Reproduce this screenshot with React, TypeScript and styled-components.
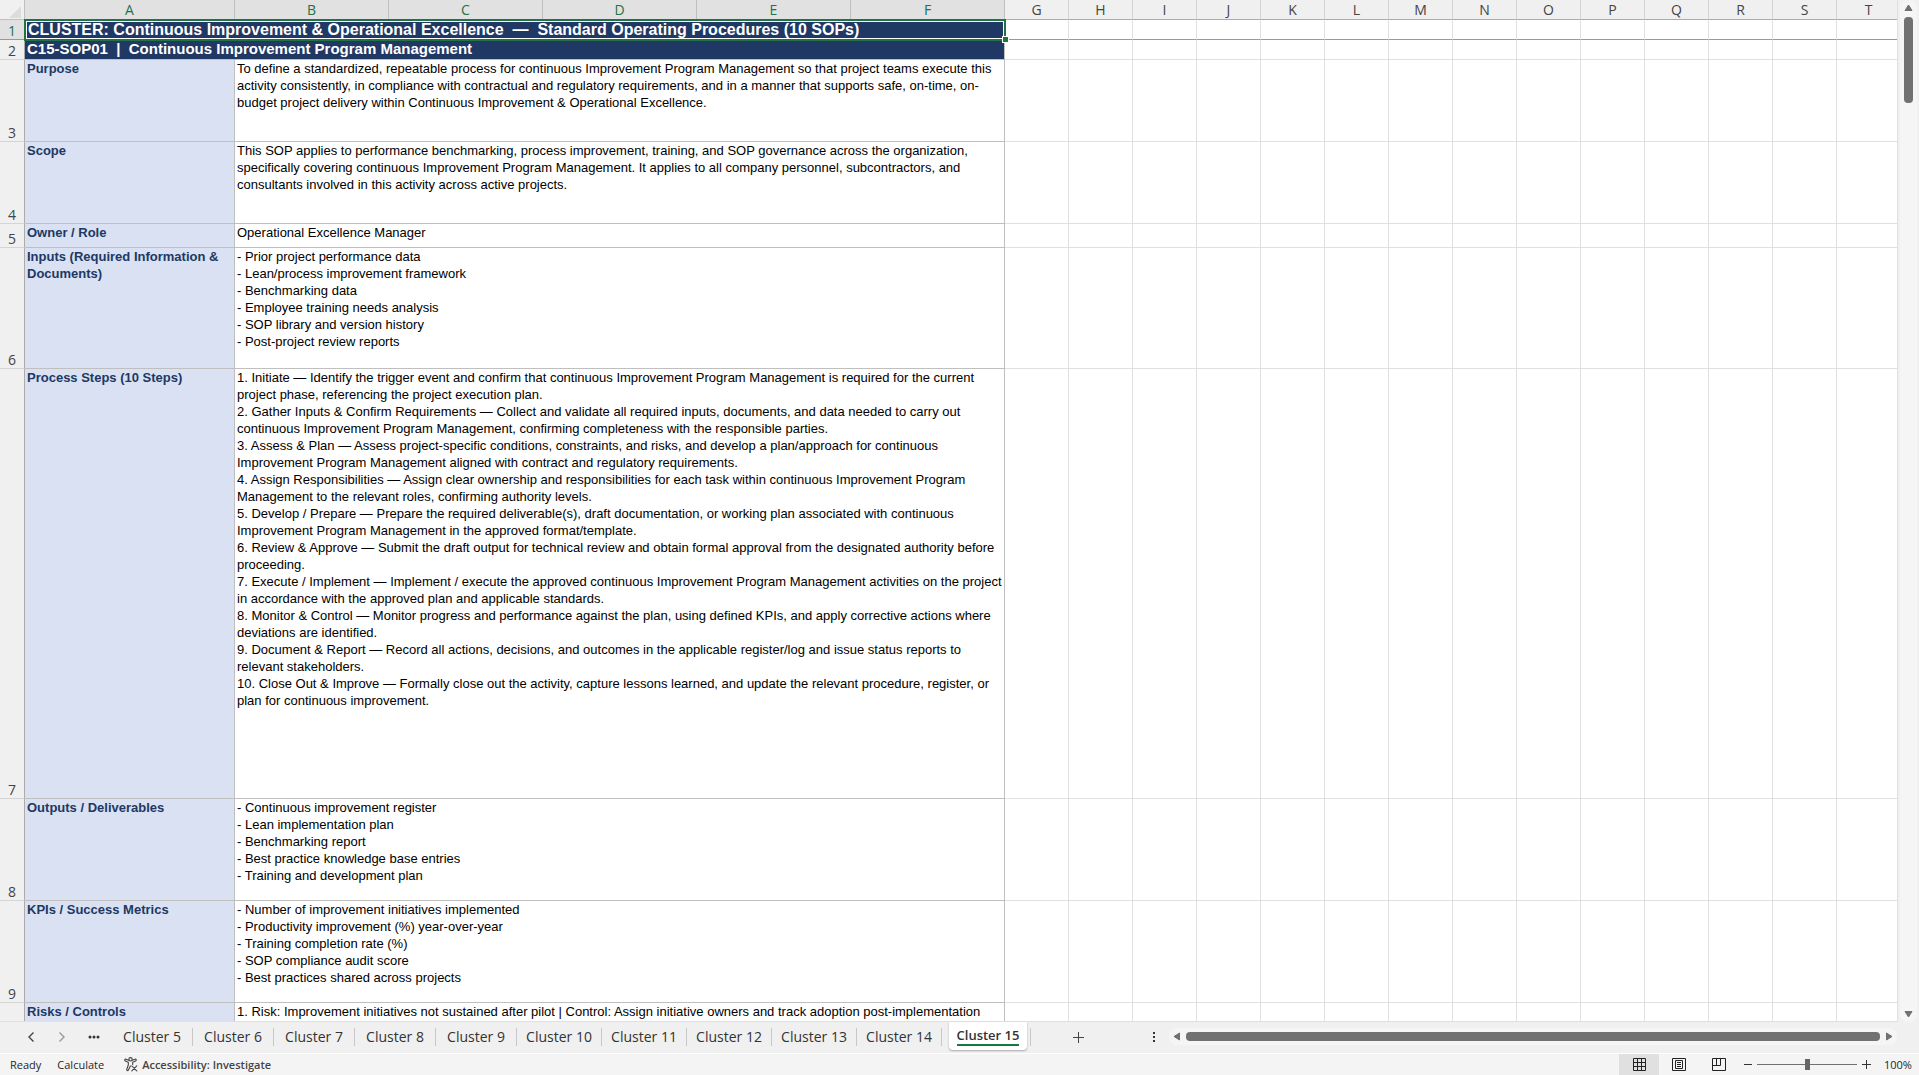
import React from 'react';
import styled, { createGlobalStyle, css } from 'styled-components';

const GlobalStyle = createGlobalStyle`
  *, *::before, *::after { box-sizing: border-box; }
  html, body { margin: 0; padding: 0; }
  body { background: #f0f0f0; overflow: hidden; }
  button { font: inherit; color: inherit; background: none; border: 0; margin: 0; padding: 0; }
`;

const uiFont = '"Open Sans", "Noto Sans", sans-serif';
const cellFont = '"Liberation Sans", Arial, sans-serif';
const gridLine = '#e0e0e0';
const cellLine = '#bfbfbf';
const navy = '#203864';
const green = '#217346';

const Workbook = styled.div`
  display: flex;
  flex-direction: column;
  height: 100vh;
  font-family: ${uiFont};
  color: #333;
`;

const SheetArea = styled.main`
  display: flex;
  flex: 1;
  min-height: 0;
`;

const GridPane = styled.div`
  flex: 1;
  min-width: 0;
  overflow: hidden;
  background: #fff;
  border-right: 1px solid ${gridLine};
  border-bottom: 1px solid ${gridLine};
`;

const Grid = styled.table`
  width: 0;
  table-layout: fixed;
  border-collapse: separate;
  border-spacing: 0;
`;

const Col = styled.col<{ $width: number }>`
  width: ${(p) => p.$width}px;
`;

const HeadRow = styled.tr`
  height: 20px;
`;

const Corner = styled.td`
  padding: 0;
  background: #f0f0f0;
  border-right: 1px solid #bfbfbf;
  border-bottom: 1px solid #bfbfbf;

  svg { display: block; margin: 4px 0 0 9px; }
`;

const ColumnHead = styled.th<{ $selected: boolean }>`
  padding: 1px 0;
  font: 400 14px/17px ${uiFont};
  color: ${(p) => (p.$selected ? green : '#444')};
  background: ${(p) => (p.$selected ? '#e1e1e1' : '#f0f0f0')};
  border-right: 1px solid ${(p) => (p.$selected ? '#bfbfbf' : '#d4d4d4')};
  border-bottom: 1px solid ${(p) => (p.$selected ? green : '#ababab')};
`;

const Row = styled.tr<{ $height: number }>`
  height: ${(p) => p.$height}px;
`;

const RowHead = styled.th<{ $selected: boolean; $frozen: boolean }>`
  padding: 0;
  vertical-align: bottom;
  font: 400 14px/17px ${uiFont};
  color: ${(p) => (p.$selected ? green : '#444')};
  background: ${(p) => (p.$selected ? '#e1e1e1' : '#f0f0f0')};
  border-right: 1px solid #ababab;
  border-bottom: 1px solid ${(p) => (p.$frozen ? '#999' : '#d4d4d4')};
`;

const Cell = styled.td<{ $frozen: boolean }>`
  padding: 0;
  border-right: 1px solid ${gridLine};
  border-bottom: 1px solid ${(p) => (p.$frozen ? '#999' : gridLine)};
`;

const banner = css`
  padding: 0 2px;
  font-family: ${cellFont};
  font-weight: 700;
  color: #fff;
  text-align: left;
  white-space: pre;
  background: ${navy};
`;

const TitleCell = styled.td`
  ${banner}
  position: relative;
  font-size: 16px;
  line-height: 18px;
  padding-left: 3px;
  border-bottom: 1px solid #999;
`;

const Selection = styled.span`
  position: absolute;
  inset: -1px -1px -2px -1px;
  border: 2px solid ${green};
  box-shadow: inset 0 0 0 1px #fff;
  pointer-events: none;
`;

const FillHandle = styled.span`
  position: absolute;
  right: -3px;
  bottom: -3px;
  width: 5px;
  height: 5px;
  background: ${green};
  outline: 1px solid #fff;
`;

const SubtitleCell = styled.td`
  ${banner}
  font-size: 15px;
  line-height: 17px;
  vertical-align: top;
  border-right: 1px solid ${cellLine};
  border-bottom: 1px solid ${cellLine};
`;

const LabelCell = styled.td`
  padding: 0 2px;
  vertical-align: top;
  font: 700 13px/17px ${cellFont};
  color: ${navy};
  white-space: pre;
  background: #d9e1f2;
  border-right: 1px solid ${cellLine};
  border-bottom: 1px solid ${cellLine};
`;

const TextCell = styled.td`
  padding: 0 2px;
  vertical-align: top;
  font: 400 13px/17px ${cellFont};
  color: #000;
  white-space: pre;
  border-right: 1px solid ${cellLine};
  border-bottom: 1px solid ${cellLine};
`;

const VerticalScroll = styled.div`
  display: flex;
  flex-direction: column;
  align-items: center;
  gap: 5px;
  width: 17px;
  margin: 0 2px;
  padding: 4px 0;
  border-radius: 8px;
  background: #f5f5f5;
`;

const VerticalThumb = styled.div`
  width: 9px;
  height: 86px;
  margin-bottom: auto;
  border-radius: 4px;
  background: #717171;
`;

const ArrowButton = styled.button`
  display: flex;
  flex: none;
`;

const TabStrip = styled.nav`
  display: flex;
  align-items: flex-start;
  flex: none;
  height: 31px;
  background: #f0f0f0;
`;

const TabNav = styled.div`
  display: flex;
  align-items: center;
  justify-content: space-between;
  width: 112px;
  height: 29px;
  padding: 0 12px 0 27px;
`;

const IconButton = styled.button`
  display: flex;
  align-items: center;
  justify-content: center;
`;

const SheetTab = styled.button<{ $wide: boolean }>`
  width: ${(p) => (p.$wide ? 85 : 81)}px;
  height: 18px;
  margin-top: 6px;
  font-size: 14px;
  line-height: 18px;
  white-space: nowrap;
  border-right: 1px solid #c8c8c8;
`;

const ActiveTabSlot = styled.div`
  display: flex;
  height: 24px;
  padding: 0 3px 0 7px;
`;

const ActiveTab = styled.button`
  width: 78px;
  height: 28px;
  padding: 4px 0 0;
  display: flex;
  flex-direction: column;
  align-items: center;
  font-size: 13px;
  font-weight: 600;
  line-height: 18px;
  white-space: nowrap;
  background: #fff;
  border-radius: 0 0 4px 4px;
  box-shadow: 0 1px 2px rgba(0, 0, 0, 0.3);

  span { border-bottom: 2px solid #107c41; }
`;

const TabDivider = styled.div`
  width: 1px;
  height: 18px;
  margin-top: 6px;
  background: #c8c8c8;
`;

const AddSlot = styled.div`
  display: flex;
  flex: none;
  align-items: center;
  justify-content: space-between;
  width: 133px;
  height: 29px;
  padding: 0 9px 0 41px;
`;

const HorizontalScroll = styled.div`
  display: flex;
  flex: 1;
  align-items: center;
  gap: 5px;
  height: 17px;
  margin: 6px 22px 0 5px;
  padding: 0 4px;
  border-radius: 8px;
  background: #f5f5f5;
`;

const HorizontalThumb = styled.div`
  flex: 1;
  height: 9px;
  border-radius: 4px;
  background: #717171;
`;

const StatusBar = styled.footer`
  display: flex;
  align-items: center;
  flex: none;
  height: 22px;
  padding: 0 7px 0 10px;
  font-size: 11px;
  line-height: 16px;
  color: #262626;
  background: #f4f4f4;
  border-top: 1px solid #fff;
`;

const StatusText = styled.span`
  margin-right: 16px;
`;

const AccessButton = styled.button`
  display: flex;
  align-items: center;
  gap: 4px;
  margin-left: 4px;
  font-weight: 600;
  color: #444;
`;

const ViewButtons = styled.div`
  display: flex;
  margin-left: auto;
  height: 21px;
`;

const ViewButton = styled(IconButton)<{ $active?: boolean }>`
  width: 40px;
  background: ${(p) => (p.$active ? '#e0e0e0' : 'transparent')};
`;

const ZoomControl = styled.div`
  display: flex;
  align-items: center;
  gap: 5px;
  margin: 0 13px 0 5px;
`;

const ZoomSlider = styled.input`
  appearance: none;
  width: 100px;
  height: 12px;
  margin: 0;
  background: linear-gradient(#717171, #717171) center / 100% 1px no-repeat;

  &::-webkit-slider-thumb {
    appearance: none;
    width: 5px;
    height: 11px;
    background: #666;
  }
`;

const ZoomLevel = styled.span`
  width: 28px;
  white-space: nowrap;
`;

type SheetRecord = { row: number; height: number; label: string; text: string };

const records: SheetRecord[] = [
  {
    row: 3,
    height: 82,
    label: 'Purpose',
    text: `To define a standardized, repeatable process for continuous Improvement Program Management so that project teams execute this
activity consistently, in compliance with contractual and regulatory requirements, and in a manner that supports safe, on-time, on-
budget project delivery within Continuous Improvement & Operational Excellence.`,
  },
  {
    row: 4,
    height: 82,
    label: 'Scope',
    text: `This SOP applies to performance benchmarking, process improvement, training, and SOP governance across the organization,
specifically covering continuous Improvement Program Management. It applies to all company personnel, subcontractors, and
consultants involved in this activity across active projects.`,
  },
  { row: 5, height: 24, label: 'Owner / Role', text: 'Operational Excellence Manager' },
  {
    row: 6,
    height: 121,
    label: 'Inputs (Required Information &\nDocuments)',
    text: `- Prior project performance data
- Lean/process improvement framework
- Benchmarking data
- Employee training needs analysis
- SOP library and version history
- Post-project review reports`,
  },
  {
    row: 7,
    height: 430,
    label: 'Process Steps (10 Steps)',
    text: `1. Initiate — Identify the trigger event and confirm that continuous Improvement Program Management is required for the current
project phase, referencing the project execution plan.
2. Gather Inputs & Confirm Requirements — Collect and validate all required inputs, documents, and data needed to carry out
continuous Improvement Program Management, confirming completeness with the responsible parties.
3. Assess & Plan — Assess project-specific conditions, constraints, and risks, and develop a plan/approach for continuous
Improvement Program Management aligned with contract and regulatory requirements.
4. Assign Responsibilities — Assign clear ownership and responsibilities for each task within continuous Improvement Program
Management to the relevant roles, confirming authority levels.
5. Develop / Prepare — Prepare the required deliverable(s), draft documentation, or working plan associated with continuous
Improvement Program Management in the approved format/template.
6. Review & Approve — Submit the draft output for technical review and obtain formal approval from the designated authority before
proceeding.
7. Execute / Implement — Implement / execute the approved continuous Improvement Program Management activities on the project
in accordance with the approved plan and applicable standards.
8. Monitor & Control — Monitor progress and performance against the plan, using defined KPIs, and apply corrective actions where
deviations are identified.
9. Document & Report — Record all actions, decisions, and outcomes in the applicable register/log and issue status reports to
relevant stakeholders.
10. Close Out & Improve — Formally close out the activity, capture lessons learned, and update the relevant procedure, register, or
plan for continuous improvement.`,
  },
  {
    row: 8,
    height: 102,
    label: 'Outputs / Deliverables',
    text: `- Continuous improvement register
- Lean implementation plan
- Benchmarking report
- Best practice knowledge base entries
- Training and development plan`,
  },
  {
    row: 9,
    height: 102,
    label: 'KPIs / Success Metrics',
    text: `- Number of improvement initiatives implemented
- Productivity improvement (%) year-over-year
- Training completion rate (%)
- SOP compliance audit score
- Best practices shared across projects`,
  },
  {
    row: 10,
    height: 19,
    label: 'Risks / Controls',
    text: '1. Risk: Improvement initiatives not sustained after pilot | Control: Assign initiative owners and track adoption post-implementation',
  },
];

const columns = 'ABCDEFGHIJKLMNOPQRST'.split('');
const columnWidth = (name: string) => (name === 'A' ? 210 : name <= 'F' ? 154 : 64);
const emptyColumns = columns.slice(6);
const tabs = [5, 6, 7, 8, 9, 10, 11, 12, 13, 14];

const EmptyCells = ({ frozen = false }: { frozen?: boolean }) => (
  <>
    {emptyColumns.map((c) => (
      <Cell key={c} $frozen={frozen} />
    ))}
  </>
);

const Arrow = ({ points, w = 9, h = 8 }: { points: string; w?: number; h?: number }) => (
  <svg width={w} height={h} viewBox={`0 0 ${w} ${h}`} aria-hidden="true">
    <polygon points={points} fill="#717171" stroke="#717171" strokeLinejoin="round" />
  </svg>
);

const Chevron = ({ d, color }: { d: string; color: string }) => (
  <svg width="8" height="12" viewBox="0 0 8 12" fill="none" stroke={color} strokeWidth="1.4" aria-hidden="true">
    <path d={d} />
  </svg>
);

const AccessibilityIcon = () => (
  <svg width="14" height="15" viewBox="0 0 14 15" fill="none" stroke="#444" strokeWidth="1.1" strokeLinecap="round" strokeLinejoin="round" aria-hidden="true">
    <circle cx="6.5" cy="2.3" r="1.7" />
    <path d="M4.8 3.2 2 2.2C.7 1.9.2 3.5 1.4 4L4.3 5.2V8L2.8 12.3c-.4 1.3 1.1 1.8 1.6.7L6.4 9" />
    <path d="M8.2 3.2 11 2.2c1.3-.3 1.8 1.3.6 1.8L8.7 5.2V7.5" />
    <path d="M7.8 8.8l5 5M12.8 8.8l-5 5" />
  </svg>
);

export default function App() {
  return (
    <Workbook>
      <GlobalStyle />
      <SheetArea>
        <GridPane>
          <Grid>
            <colgroup>
              <Col $width={25} />
              {columns.map((c) => (
                <Col key={c} $width={columnWidth(c)} />
              ))}
            </colgroup>
            <thead>
              <HeadRow>
                <Corner>
                  <svg width="12" height="12" viewBox="0 0 12 12" aria-hidden="true">
                    <path d="M12 0V12H0Z" fill="#dcdcdc" />
                  </svg>
                </Corner>
                {columns.map((c) => (
                  <ColumnHead key={c} scope="col" $selected={c <= 'F'}>
                    {c}
                  </ColumnHead>
                ))}
              </HeadRow>
            </thead>
            <tbody>
              <Row $height={20}>
                <RowHead scope="row" $selected $frozen>1</RowHead>
                <TitleCell colSpan={6}>
                  {'CLUSTER: Continuous Improvement & Operational Excellence  —  Standard Operating Procedures (10 SOPs)'}
                  <Selection />
                  <FillHandle />
                </TitleCell>
                <EmptyCells frozen />
              </Row>
              <Row $height={20}>
                <RowHead scope="row" $selected={false} $frozen={false}>2</RowHead>
                <SubtitleCell colSpan={6}>{'C15-SOP01  |  Continuous Improvement Program Management'}</SubtitleCell>
                <EmptyCells />
              </Row>
              {records.map((r) => (
                <Row key={r.row} $height={r.height}>
                  <RowHead scope="row" $selected={false} $frozen={false}>{r.row < 10 ? r.row : null}</RowHead>
                  <LabelCell>{r.label}</LabelCell>
                  <TextCell colSpan={5}>{r.text}</TextCell>
                  <EmptyCells />
                </Row>
              ))}
            </tbody>
          </Grid>
        </GridPane>
        <VerticalScroll>
          <ArrowButton aria-label="Scroll up"><Arrow points="4.5,1 8,6.5 1,6.5" /></ArrowButton>
          <VerticalThumb />
          <ArrowButton aria-label="Scroll down"><Arrow points="1,1.5 8,1.5 4.5,7" /></ArrowButton>
        </VerticalScroll>
      </SheetArea>

      <TabStrip aria-label="Sheets">
        <TabNav>
          <IconButton aria-label="Previous sheet"><Chevron d="M6.5 1.5 2 6l4.5 4.5" color="#444" /></IconButton>
          <IconButton aria-label="Next sheet"><Chevron d="M1.5 1.5 6 6l-4.5 4.5" color="#999" /></IconButton>
          <IconButton aria-label="More sheets">
            <svg width="12" height="4" viewBox="0 0 12 4" fill="#333" aria-hidden="true">
              <circle cx="2" cy="2" r="1.5" /><circle cx="6" cy="2" r="1.5" /><circle cx="10" cy="2" r="1.5" />
            </svg>
          </IconButton>
        </TabNav>
        {tabs.map((n) => (
          <SheetTab key={n} $wide={n > 9}>Cluster {n}</SheetTab>
        ))}
        <ActiveTabSlot>
          <ActiveTab aria-current="page"><span>Cluster 15</span></ActiveTab>
        </ActiveTabSlot>
        <TabDivider />
        <AddSlot>
          <IconButton aria-label="New sheet">
            <svg width="12" height="12" viewBox="0 0 12 12" stroke="#444" strokeWidth="1" aria-hidden="true">
              <path d="M6.5 1v11M1 6.5h11" />
            </svg>
          </IconButton>
          <IconButton aria-label="Resize tab bar">
            <svg width="2" height="10" viewBox="0 0 2 10" fill="#333" aria-hidden="true">
              <path d="M0 0h2v2H0zM0 4h2v2H0zM0 8h2v2H0z" />
            </svg>
          </IconButton>
        </AddSlot>
        <HorizontalScroll>
          <ArrowButton aria-label="Scroll left"><Arrow w={8} h={9} points="6.5,1 6.5,8 1,4.5" /></ArrowButton>
          <HorizontalThumb />
          <ArrowButton aria-label="Scroll right"><Arrow w={8} h={9} points="1.5,1 1.5,8 7,4.5" /></ArrowButton>
        </HorizontalScroll>
      </TabStrip>

      <StatusBar>
        <StatusText>Ready</StatusText>
        <StatusText>Calculate</StatusText>
        <AccessButton><AccessibilityIcon />Accessibility: Investigate</AccessButton>
        <ViewButtons>
          <ViewButton $active aria-label="Normal view">
            <svg width="13" height="13" viewBox="0 0 13 13" fill="none" stroke="#222" aria-hidden="true">
              <path d="M.5.5h12v12H.5zM4.5.5v12M8.5.5v12M.5 4.5h12M.5 8.5h12" />
            </svg>
          </ViewButton>
          <ViewButton aria-label="Page layout view">
            <svg width="14" height="13" viewBox="0 0 14 13" fill="none" stroke="#222" aria-hidden="true">
              <path d="M.5.5h13v12H.5zM3.5 2.5h7v8h-7zM5 4.5h4M5 6.5h4M5 8.5h4" />
            </svg>
          </ViewButton>
          <ViewButton aria-label="Page break preview">
            <svg width="14" height="13" viewBox="0 0 14 13" fill="none" stroke="#222" aria-hidden="true">
              <path d="M.5.5h13v12H.5zM.5 7.5h8M8.5.5v7M4.5.5v7" />
            </svg>
          </ViewButton>
        </ViewButtons>
        <ZoomControl>
          <IconButton aria-label="Zoom out">
            <svg width="8" height="9" viewBox="0 0 8 9" stroke="#333" aria-hidden="true"><path d="M0 4.5h8" /></svg>
          </IconButton>
          <ZoomSlider type="range" min={0} max={100} defaultValue={50} aria-label="Zoom" />
          <IconButton aria-label="Zoom in">
            <svg width="9" height="9" viewBox="0 0 9 9" stroke="#333" aria-hidden="true"><path d="M0 4.5h9M4.5 0v9" /></svg>
          </IconButton>
        </ZoomControl>
        <ZoomLevel>100%</ZoomLevel>
      </StatusBar>
    </Workbook>
  );
}
